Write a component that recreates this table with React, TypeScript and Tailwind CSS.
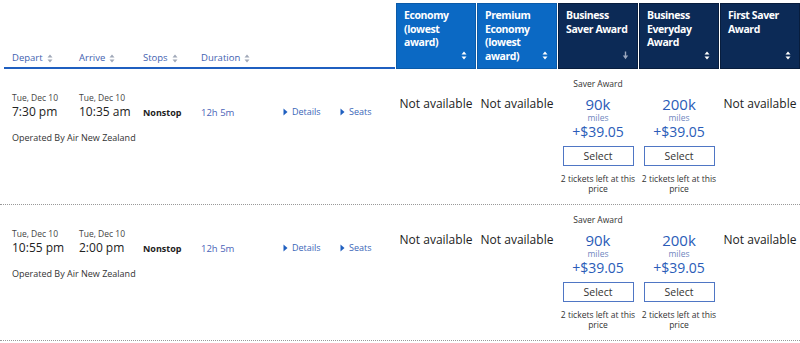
import React from "react";

type Flight = {
  departDate: string;
  departTime: string;
  arriveDate: string;
  arriveTime: string;
};

const flights: Flight[] = [
  { departDate: "Tue, Dec 10", departTime: "7:30 pm", arriveDate: "Tue, Dec 10", arriveTime: "10:35 am" },
  { departDate: "Tue, Dec 10", departTime: "10:55 pm", arriveDate: "Tue, Dec 10", arriveTime: "2:00 pm" },
];

const cabins = [
  { label: ["Economy", "(lowest", "award)"], dark: false, sort: "both" },
  { label: ["Premium", "Economy", "(lowest", "award)"], dark: false, sort: "both" },
  { label: ["Business", "Saver Award"], dark: true, sort: "down" },
  { label: ["Business", "Everyday", "Award"], dark: true, sort: "both" },
  { label: ["First Saver", "Award"], dark: true, sort: "both" },
];

function SortIcon({ color }: { color: string }) {
  return (
    <svg width="6" height="9" viewBox="0 0 6 9" className="inline-block">
      <path d="M3 0.5 L5.5 3.5 H0.5 Z" fill={color} />
      <path d="M3 8.5 L5.5 5.5 H0.5 Z" fill={color} />
    </svg>
  );
}

function DownIcon() {
  return (
    <svg width="7" height="9" viewBox="0 0 7 9" className="inline-block">
      <path d="M3.5 0.5 V5.5" stroke="#9aa6bd" strokeWidth="1.4" />
      <path d="M0.8 4.6 L3.5 8.3 L6.2 4.6 Z" fill="#9aa6bd" />
    </svg>
  );
}

function Caret() {
  return (
    <svg width="5" height="8" viewBox="0 0 5 8" className="inline-block mr-[4px]">
      <path d="M0.5 0.5 L4.5 4 L0.5 7.5 Z" fill="#1f5fc0" />
    </svg>
  );
}

function AwardCell({ miles, label }: { miles: string; label?: string }) {
  return (
    <div className="flex flex-col items-center pt-[9px] text-center">
      <div className="h-[12px] text-[8.5px] leading-[12px] text-[#333] whitespace-nowrap">{label}</div>
      <div className="mt-[5px] text-[15px] leading-[18px] text-[#2a5cb8]">{miles}</div>
      <div className="text-[8.5px] leading-[9px] text-[#6f86c0]">miles</div>
      <div className="mt-[1px] text-[14px] leading-[18px] text-[#2a5cb8]">+$39.05</div>
      <button className="mt-[5px] w-[71px] h-[20px] border border-[#4f76c4] bg-white text-[10.5px] leading-[18px] text-[#333]">
        Select
      </button>
      <div className="mt-[8px] text-[8.5px] leading-[10px] text-[#333] w-[80px]">
        2 tickets left at this price
      </div>
    </div>
  );
}

function NotAvailable() {
  return (
    <div className="pt-[26px] text-center text-[12px] leading-[18px] text-[#222] whitespace-nowrap">
      Not available
    </div>
  );
}

export default function App() {
  return (
    <div className="w-[800px] h-[343px] bg-white pt-[3px] overflow-hidden" style={{ fontFamily: '"Open Sans", "Liberation Sans", sans-serif' }}>
      {/* HEADER */}
      <div className="grid grid-cols-[395px_repeat(5,80px)] grid-rows-[66px] gap-x-px h-[66px]">
        <div className="ml-[4px] flex items-end border-b-2 border-[#1f5fc0] pb-[3px] pl-[8px] text-[9.5px] leading-[12px] text-[#3f62b0]">
          <div className="w-[67px] flex items-center gap-[4px]">Depart <SortIcon color="#a0a8b8" /></div>
          <div className="w-[64px] flex items-center gap-[4px]">Arrive <SortIcon color="#a0a8b8" /></div>
          <div className="w-[58px] flex items-center gap-[4px]">Stops <SortIcon color="#a0a8b8" /></div>
          <div className="flex items-center gap-[4px]">Duration <SortIcon color="#a0a8b8" /></div>
        </div>
        {cabins.map((c, i) => (
          <div
            key={i}
            className={`relative overflow-hidden pl-[7px] pr-[2px] pt-[5px] border ${
              c.dark ? "bg-[#0c2a56] border-[#081d3d]" : "bg-[#0b69c4] border-[#0a5aa8]"
            }`}
          >
            <div className="text-white font-bold text-[10.5px] leading-[13.5px] tracking-[-0.4px]">
              {c.label.map((l, j) => (
                <div key={j} className="whitespace-nowrap">{l}</div>
              ))}
            </div>
            <div className="absolute right-[8px] bottom-[6px] leading-none">
              {c.sort === "down" ? <DownIcon /> : <SortIcon color="#ffffff" />}
            </div>
          </div>
        ))}
      </div>

      {/* ROWS */}
      {flights.map((f, i) => (
        <div
          key={i}
          className="grid grid-cols-[395px_repeat(5,80px)] gap-x-px h-[136px] border-b border-dotted border-[#999]"
        >
          <div className="pl-[12px] pt-[23px] text-[#222]">
            <div className="flex">
              <div className="w-[67px]">
                <div className="text-[8.5px] leading-[12px] text-[#444]">{f.departDate}</div>
                <div className="text-[12px] leading-[16px]">{f.departTime}</div>
              </div>
              <div className="w-[64px]">
                <div className="text-[8.5px] leading-[12px] text-[#444]">{f.arriveDate}</div>
                <div className="text-[12px] leading-[16px]">{f.arriveTime}</div>
              </div>
              <div className="w-[58px] pt-[14px] text-[9px] leading-[14px] font-bold">Nonstop</div>
              <div className="w-[82px] pt-[14px] text-[9.5px] leading-[14px] text-[#4a64b8]">12h 5m</div>
              <div className="w-[57px] pt-[12px] text-[9px] leading-[14px] text-[#3a66b8] flex items-center">
                <Caret />Details
              </div>
              <div className="pt-[12px] text-[9px] leading-[14px] text-[#3a66b8] flex items-center">
                <Caret />Seats
              </div>
            </div>
            <div className="mt-[11px] text-[9px] leading-[14px] text-[#333]">Operated By Air New Zealand</div>
          </div>
          <NotAvailable />
          <NotAvailable />
          <AwardCell miles="90k" label="Saver Award" />
          <AwardCell miles="200k" />
          <NotAvailable />
        </div>
      ))}
    </div>
  );
}
